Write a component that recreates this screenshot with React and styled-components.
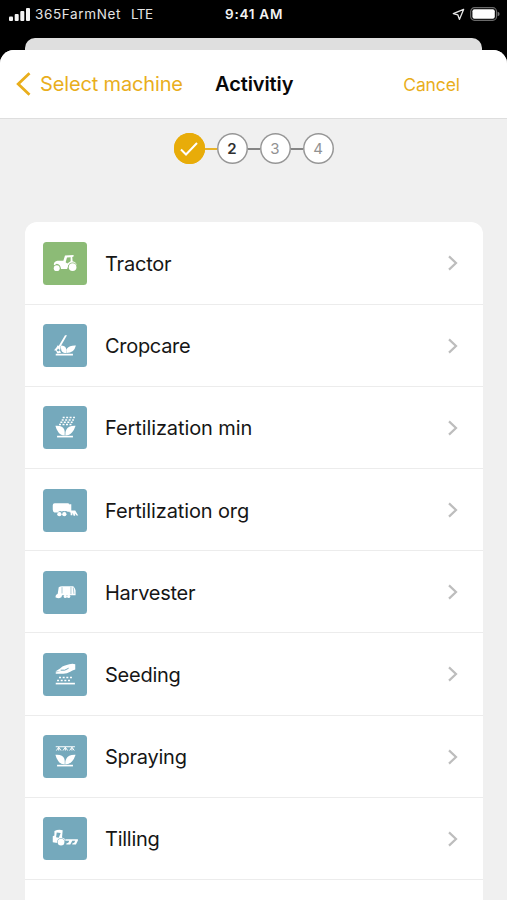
import React from "react";
import styled, { createGlobalStyle } from "styled-components";

const GlobalStyle = createGlobalStyle`
  * { box-sizing: border-box; }
  body {
    margin: 0;
    background: #000;
    font-family: Inter, "Liberation Sans", sans-serif;
    -webkit-font-smoothing: antialiased;
  }
`;

const Screen = styled.div`
  width: 507px;
  height: 900px;
  overflow: hidden;
  display: flex;
  flex-direction: column;
  background: #000;
`;

const StatusBar = styled.div`
  height: 38px;
  flex: none;
  display: grid;
  grid-template-columns: 216px 1fr auto;
  padding: 0 7px 10px 9px;
  align-items: center;
  color: #e4e4e4;
  font-size: 13.5px;
  line-height: 16px;
`;

const Carrier = styled.div`
  display: flex;
  align-items: center;
  gap: 5px;
  letter-spacing: 0.63px;
`;

const Network = styled.span`
  margin-left: 5px;
  letter-spacing: -0.5px;
`;

const Clock = styled.div`
  font-weight: 600;
  letter-spacing: 0.75px;
  color: #f2f2f2;
`;

const Indicators = styled.div`
  display: flex;
  justify-content: flex-end;
  align-items: center;
  gap: 5px;
`;

const SheetBehind = styled.div`
  height: 12px;
  flex: none;
  margin: 0 25px;
  border-radius: 10px 10px 0 0;
  background: #dfdfdf;
`;

const Sheet = styled.div`
  flex: 1;
  min-height: 0;
  display: flex;
  flex-direction: column;
  overflow: hidden;
  border-radius: 14px 14px 0 0;
  background: #f0f0f0;
`;

const NavBar = styled.header`
  height: 69px;
  flex: none;
  display: grid;
  grid-template-columns: 199px 1fr auto;
  align-items: center;
  padding: 0 47px 0 16px;
  background: #fff;
  border-bottom: 1px solid #dedede;
`;

const NavButton = styled.button`
  display: flex;
  align-items: center;
  gap: 9px;
  padding: 0;
  border: 0;
  background: none;
  color: #e9ae1c;
  font-family: inherit;
  font-size: ${(p) => p.$size}px;
  letter-spacing: ${(p) => p.$tracking}px;
  justify-self: ${(p) => p.$side};
  white-space: nowrap;
`;

const Title = styled.h1`
  margin: 0;
  font-size: 20px;
  font-weight: 600;
  letter-spacing: -0.1px;
  color: #080808;
  white-space: nowrap;
`;

const Stepper = styled.div`
  height: 103.4px;
  flex: none;
  display: flex;
  justify-content: center;
  align-items: flex-start;
  padding-top: 14.4px;
`;

const Step = styled.div`
  width: 31px;
  height: 31px;
  display: flex;
  align-items: center;
  justify-content: center;
  border-radius: 50%;
  box-shadow: inset 0 0 0 1.5px ${(p) => (p.$done ? "#e8ac09" : "#969696")};
  background: ${(p) => (p.$done ? "#e8ac09" : "#fff")};
  color: ${(p) => (p.$current ? "#303030" : "#929292")};
  font-size: 15px;
  font-weight: ${(p) => (p.$current ? 600 : 400)};
`;

const Connector = styled.div`
  width: 12px;
  height: 2px;
  margin-top: 15px;
  background: ${(p) => (p.$done ? "#e8b32a" : "#858585")};
`;

const Card = styled.div`
  flex: 1;
  min-height: 0;
  margin: 0 24.5px 0 25px;
  overflow: hidden;
  border-radius: 12px 12px 0 0;
  background: #fff;
`;

const Row = styled.div`
  height: 82.2px;
  display: flex;
  align-items: center;
  padding: 0 25px 0 18.4px;
  border-bottom: 1px solid #ececec;
`;

const Tile = styled.div`
  width: 44px;
  height: 43px;
  flex: none;
  margin-top: 1px;
  border-radius: 3.5px;
  background: ${(p) => p.$color};

  svg { display: block; }
`;

const Label = styled.span`
  flex: 1;
  margin-left: 17.6px;
  margin-top: 2px;
  font-size: 20px;
  letter-spacing: ${(p) => p.$tracking}px;
  color: #161616;
`;

const ChevronIcon = styled.svg`
  margin-top: 1px;
`;

const Chevron = () => (
  <ChevronIcon width="10" height="16" viewBox="0 0 10 16" fill="none" stroke="#bdbdbd" strokeWidth="2.2">
    <path d="M1 1.4 8 8l-7 6.6" />
  </ChevronIcon>
);

const Signal = () => (
  <svg width="21" height="13" viewBox="0 0 21 13" fill="#f4f4f4">
    <rect x="0" y="8.5" width="4" height="4.5" rx="1" />
    <rect x="5.7" y="6" width="4" height="7" rx="1" />
    <rect x="11.3" y="3" width="4" height="10" rx="1" />
    <rect x="17" y="0" width="4" height="13" rx="1" />
  </svg>
);

const Location = () => (
  <svg width="13" height="13" viewBox="0 0 13 13" fill="none" stroke="#e8e8e8" strokeWidth="1.3" strokeLinejoin="round">
    <path d="M11.6 1.4 1.3 5.6l4.5 1.2 1.6 4.6Z" />
  </svg>
);

const Battery = () => (
  <svg width="30" height="14" viewBox="0 0 30 14">
    <rect x="0.7" y="0.7" width="25.8" height="12.6" rx="3.8" fill="none" stroke="#6a6a6a" strokeWidth="1.2" />
    <rect x="2.4" y="2.2" width="22.4" height="9.6" rx="2" fill="#fff" />
    <path d="M27.6 4.7q2 .6 2 2.3t-2 2.3Z" fill="#777" />
  </svg>
);

const Leaves = () => (
  <>
    <path d="M36 60q22-2 27 12 2 7 1 17-14-1-19-10-6-6-9-19Z" />
    <path d="M97 60q-22-1-28 12-4 7-3 17 13 0 20-9 7-7 11-20Z" />
    <path d="M41 90h48v5H41Z" />
  </>
);

const TractorArt = () => (
  <>
    <path
      fillRule="evenodd"
      d="M31 68q1-9 11-11h18l5-16 26-2v5l-4 1 1 13q10 2 13 12H75q-2 9-4 12H53q-2-15-13-16l-7 4Zm40-21-4 14 5 4 10-7V46Z"
    />
    <circle cx="40" cy="79" r="9" />
    <circle cx="88" cy="76" r="14" fill="#8cbb76" />
    <circle cx="88" cy="76" r="11.5" />
  </>
);

const CropcareArt = () => (
  <>
    <path d="M65 34h6L50 71l-5-3Z" />
    <path d="m43 64 9 6-2 9-6-5-4 6 5 3 4-4 4 8-11 2-4-8-6-2 7-8Z" />
    <path d="M53 65q12 1 15 8 2 6 1 15-11 0-15-8-2-5-1-15ZM98 65q-19-1-27 9-4 5-3 14 14 0 21-6 6-6 9-17ZM37 90h52v5H37Z" />
  </>
);

const DropRows = () => (
  <g fill="none" stroke="#fff" strokeWidth="4.5">
    <path d="M58 35h37" strokeDasharray="6 4.5" />
    <path d="M55 42h37" strokeDasharray="6 4.5" />
    <path d="M51 49h37" strokeDasharray="6 4.5" />
    <path d="M47 56h38" strokeDasharray="6 4.5" />
  </g>
);

const FertilizationArt = () => (
  <>
    <DropRows />
    <Leaves />
  </>
);

const TankerArt = () => (
  <>
    <path d="M34 43h40q5 0 5 5v21H73q-4-4-9-2-5-2-9 1-5-3-9 0l-3 3H33q-5-2-5-9V49q0-6 6-6ZM79 46h5v19h12l9 15h-5l-5-6 1 7h-5l-3-9-1 7h-5v-8h-3Z" />
    <circle cx="48" cy="76" r="6.5" />
    <circle cx="63" cy="76" r="6.5" />
  </>
);

const HarvesterArt = () => (
  <>
    <path d="M46 49q4-3 10-3h34q6 5 7 13v14H56q0 7-7 9-7 1-13-3 0-7 7-10Z" />
    <path d="M56 49v19M83 48v22M90 50l2 19" fill="none" stroke="#75a9bc" strokeWidth="1.8" />
    <circle cx="66" cy="77" r="5" />
    <circle cx="76" cy="77" r="5" />
  </>
);

const SeedingArt = () => (
  <>
    <path d="m36 56 14-9q7-8 15-9l13-4q10-3 18 0v16q-9 2-15 7-10 6-21 6H37v-5l15-1Z" />
    <path d="M52 52h12l12-6" fill="none" stroke="#75a9bc" strokeWidth="3" />
    <g fill="none" stroke="#fff" strokeWidth="5">
      <path d="M47 74h41" strokeDasharray="6 5" />
      <path d="M41 83h43" strokeDasharray="6 5" />
    </g>
    <path d="M37 90h58v5H37Z" />
  </>
);

const SprayingArt = () => (
  <>
    <path d="M37 34h58v3H37Z" />
    <path
      d="m46 37-7 10m7-10v10m0-10 7 10m13-10-7 10m7-10v10m0-10 7 10m13-10-7 10m7-10v10m0-10 7 10"
      fill="none"
      stroke="#fff"
      strokeWidth="3"
    />
    <Leaves />
  </>
);

const TillingArt = () => (
  <>
    <path fillRule="evenodd" d="M33 42q12-5 25-2l-2 22 8 4 1 8-10 5-18-1-9-2V58l5-2Zm7 5-2 14 8 2 6-15Z" />
    <circle cx="53" cy="76" r="11.5" fill="#75a9bc" />
    <circle cx="53" cy="76" r="10" />
    <path d="M66 67h38v4l-6 12H87v-3l6-2 3-6h-9l-6 11H69v-3l6-2 3-6H66Z" />
  </>
);

const BLUE = "#75a9bc";
const GREEN = "#8cbb76";

const activities = [
  { label: "Tractor", color: GREEN, Art: TractorArt, tracking: -0.2 },
  { label: "Cropcare", color: BLUE, Art: CropcareArt, tracking: -0.3 },
  { label: "Fertilization min", color: BLUE, Art: FertilizationArt, tracking: -0.1 },
  { label: "Fertilization org", color: BLUE, Art: TankerArt, tracking: -0.12 },
  { label: "Harvester", color: BLUE, Art: HarvesterArt, tracking: -0.25 },
  { label: "Seeding", color: BLUE, Art: SeedingArt, tracking: -0.25 },
  { label: "Spraying", color: BLUE, Art: SprayingArt, tracking: -0.25 },
  { label: "Tilling", color: BLUE, Art: TillingArt, tracking: -0.25 },
];

export default function App() {
  return (
    <Screen>
      <GlobalStyle />
      <StatusBar>
        <Carrier>
          <Signal />
          <span>365FarmNet</span>
          <Network>LTE</Network>
        </Carrier>
        <Clock>9:41 AM</Clock>
        <Indicators>
          <Location />
          <Battery />
        </Indicators>
      </StatusBar>
      <SheetBehind />
      <Sheet>
        <NavBar>
          <NavButton $size={20} $tracking={-0.15} $side="start">
            <svg width="15" height="24" viewBox="0 0 15 24" fill="none" stroke="currentColor" strokeWidth="2.8">
              <path d="M13.5 1.2 2.2 12l11.3 10.8" />
            </svg>
            Select machine
          </NavButton>
          <Title>Activitiy</Title>
          <NavButton $size={17.5} $tracking={-0.1} $side="end">Cancel</NavButton>
        </NavBar>
        <Stepper>
          <Step $done>
            <svg width="18" height="14" viewBox="0 0 18 14" fill="none" stroke="#fff" strokeWidth="2">
              <path d="m1 7.5 5 5L17 1" />
            </svg>
          </Step>
          <Connector $done />
          <Step $current>2</Step>
          <Connector />
          <Step>3</Step>
          <Connector />
          <Step>4</Step>
        </Stepper>
        <Card>
          {activities.map(({ label, color, Art, tracking }) => (
            <Row key={label}>
              <Tile $color={color}>
                <svg width="44" height="43" viewBox="-1 0 132 130" fill="#fff">
                  <Art />
                </svg>
              </Tile>
              <Label $tracking={tracking}>{label}</Label>
              <Chevron />
            </Row>
          ))}
        </Card>
      </Sheet>
    </Screen>
  );
}
